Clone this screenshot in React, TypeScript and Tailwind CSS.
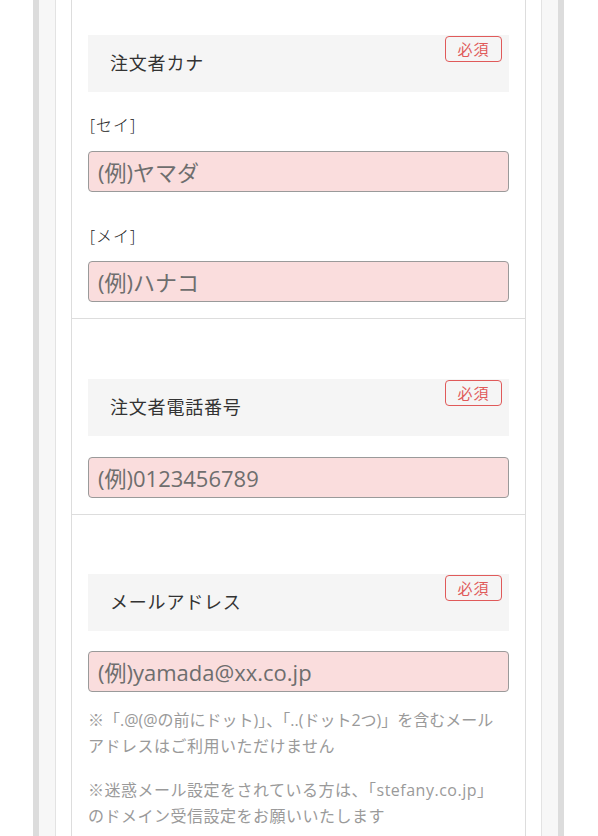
import React from "react";

const font = { fontFamily: '"Open Sans", "Noto Sans CJK JP", sans-serif' };

function Heading({ title }: { title: string }) {
  return (
    <div className="relative flex h-[57px] items-center bg-[#f5f5f5] pl-[22px] text-[18px] tracking-[0.8px] text-[#333]">
      {title}
      <span className="absolute right-[7px] top-[1px] flex h-[26px] w-[57px] items-center justify-center rounded-[4px] border-[1.5px] border-[#e05a5a] text-[15px] tracking-[1px] text-[#e05a5a]">
        必須
      </span>
    </div>
  );
}

function Field({ placeholder }: { placeholder: string }) {
  return (
    <input
      type="text"
      placeholder={placeholder}
      style={font}
      className="block h-[41px] w-full rounded-[4px] border border-[#9a9a9a] bg-[#fadddd] px-[9px] text-[22px] text-[#333] placeholder:text-[#6e6e6e] outline-none"
    />
  );
}

export default function App() {
  return (
    <div className="min-h-screen bg-white" style={font}>
      <div className="ml-[33px] flex min-h-screen w-[531px] border-x-[6px] border-[#dcdcdc] bg-[#f7f7f7] px-[16px]">
        <div className="flex w-full border-x border-[#e3e3e3] bg-white px-[15px]">
          <div className="w-full border-x border-[#dddddd]">
            {/* カナ */}
            <section className="border-b border-[#dddddd] px-[16px] pt-[35px] pb-[16px]">
              <Heading title="注文者カナ" />
              <div className="mt-[21px] mb-[14px] h-[24px] pl-[2px] text-[16px] font-light leading-[24px] tracking-[1px] text-[#222]">
                [セイ]
              </div>
              <Field placeholder="(例)ヤマダ" />
              <div className="mt-[32px] mb-[13px] h-[24px] pl-[2px] text-[16px] font-light leading-[24px] tracking-[1px] text-[#222]">
                [メイ]
              </div>
              <Field placeholder="(例)ハナコ" />
            </section>

            {/* 電話番号 */}
            <section className="border-b border-[#dddddd] px-[16px] pt-[60px] pb-[16px]">
              <Heading title="注文者電話番号" />
              <div className="mt-[21px]">
                <Field placeholder="(例)0123456789" />
              </div>
            </section>

            {/* メール */}
            <section className="px-[16px] pt-[59px] pb-[16px]">
              <Heading title="メールアドレス" />
              <div className="mt-[20px]">
                <Field placeholder="(例)yamada@xx.co.jp" />
              </div>
              <p className="mt-[15px] whitespace-nowrap text-[16px] leading-[26px] tracking-[0.5px] text-[#9a9a9a]">
                <span className="tracking-normal">※「.@(@の前にドット)」、「..(ドット2つ)」を含むメール</span>
                <br />
                アドレスはご利用いただけません
              </p>
              <p className="mt-[18px] whitespace-nowrap text-[16px] leading-[26px] tracking-[0.5px] text-[#9a9a9a]">
                ※迷惑メール設定をされている方は、「stefany.co.jp」
                <br />
                のドメイン受信設定をお願いいたします
              </p>
            </section>
          </div>
        </div>
      </div>
    </div>
  );
}
